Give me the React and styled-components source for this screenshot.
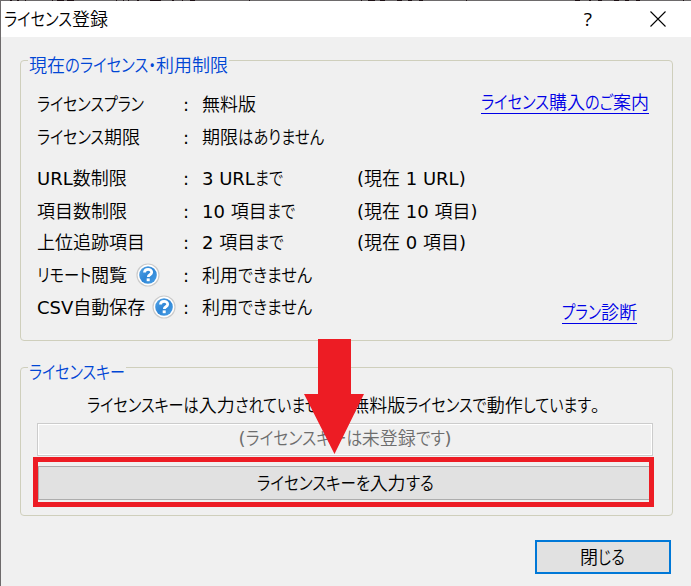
import React, { useLayoutEffect, useRef } from 'react'
import styled, { createGlobalStyle, css } from 'styled-components'

const GlobalStyle = createGlobalStyle`
	body {
		margin: 0;
		overflow: hidden;
		font-family: 'DejaVu Sans', 'Noto Sans CJK JP', sans-serif;
		font-size: 18px;
		font-weight: 350;
		color: #000;
	}

	*, *::before, *::after {
		box-sizing: border-box;
	}
`

const WindowX = styled.div`
	position: relative;
	width: 691px;
	height: 586px;
	display: flex;
	flex-direction: column;
	background-color: #f0f0f0;
	border-left: 1px solid #6d6a6b;
`

const EdgeX = styled.svg`
	display: block;
	flex: 0 0 1px;
	background-color: #6d6a6b;
`

const TitleBarX = styled.header`
	flex: 0 0 36px;
	display: flex;
	align-items: center;
	padding: 0 25px 0 3px;
	background-color: #fff;
`

const TitleX = styled.h1`
	flex: 1;
	margin: 0;
	padding-top: 1px;
	font-size: inherit;
	font-weight: inherit;
	line-height: 18px;
`

const HelpX = styled.span`
	font-family: 'Open Sans', 'Noto Sans', sans-serif;
	font-size: 19px;
	font-weight: 400;
	line-height: 20px;
	margin-right: 58px;
`

const BodyX = styled.main`
	display: flex;
	flex-direction: column;
	padding: 10px 18px 0 19px;
`

const GroupX = styled.fieldset`
	position: relative;
	min-width: 0;
	height: ${props => props.$height}px;
	margin: ${props => props.$top || 0}px 0 0;
	padding: 0;
	border: 1px solid #cfcfbc;
	border-radius: 4px;
`

const LegendX = styled.legend`
	height: 27px;
	margin-left: 7px;
	padding: 10px 1px 0;
	line-height: 18px;
	color: #0046d5;
`

const LicenseX = styled.div`
	display: flex;
	justify-content: space-between;
	padding: 16px 23px 0 16px;
`

const RowX = styled.div`
	display: grid;
	grid-template-columns: 146px 19px 155px auto;
	align-items: center;
	height: 30px;
	margin-top: ${props => props.$gap || 0}px;
	line-height: 20px;
`

const NameX = styled.div`
	display: flex;
	align-items: center;
	gap: ${props => props.$gap || 9}px;

	svg {
		margin-top: -2px;
	}
`

const LinksX = styled.div`
	display: flex;
	flex-direction: column;
	justify-content: space-between;
	align-items: flex-end;
	padding: 2px 0 0;
	margin-bottom: -1px;
`

const LinkX = styled.a`
	height: 22px;
	margin-right: ${props => props.$right || 0}px;
	padding-top: 1px;
	line-height: 20px;
	color: #0000e6;
	border-bottom: 1px solid #0000e6;
`

const KeyX = styled.div`
	display: flex;
	flex-direction: column;
	padding: 15px 19px 0 16px;
`

const MessageX = styled.p`
	margin: 0 0 7px 50px;
	line-height: 20px;
`

const FieldX = styled.div`
	display: flex;
	justify-content: center;
	align-items: center;
	height: 33px;
	padding-bottom: 1px;
	color: #6d6d6d;
	border: 1px solid #ccc;
	box-shadow: inset 0 0 0 1px #fff;
	line-height: 20px;
`

const ButtonX = styled.button`
	display: flex;
	justify-content: center;
	align-items: center;
	height: 34px;
	padding: 1px 1px 0 0;
	font: inherit;
	line-height: 20px;
	color: #000;
	background-color: #e1e1e1;
	border: 1px solid #adadad;

	${props => props.$primary && css`
		align-self: flex-end;
		width: 136px;
		margin: 24px 2px 0 0;
		border: 2px solid #0078d7;
	`}
`

const HighlightX = styled.div`
	position: relative;
	margin: 10px 0 0 1px;
	display: grid;

	&::after {
		content: '';
		position: absolute;
		inset: -9px -1px -7px -5px;
		border: 5px solid #ed1c24;
	}
`

const ArrowX = styled.svg`
	position: absolute;
	left: 302px;
	top: 339px;
`

const TextX = styled.span`
	display: inline-flex;
	align-items: baseline;
	white-space: pre;
`

const RunX = styled.span`
	display: inline-block;
	transform-origin: 0 50%;
	font-weight: ${props => props.$latin ? 400 : 'inherit'};

	${props => props.$kana && css`
		font-feature-settings: 'palt';
	`}
`

const KANA = /[\u3041-\u30ff]/
const LATIN = /[ -~]/
const RUNS = /([\u3041-\u30ff]+|[ -~]+)/

// Narrows the kana runs so that the whole line takes the given width.
const Text = ({ width, children }) => {

	const ref = useRef( null )
	const runs = children.split( RUNS ).filter( Boolean )

	useLayoutEffect( () => {
		const nodes = [ ...ref.current.children ]
		nodes.forEach( node => {
			node.style.width = 'auto'
			node.style.transform = 'none'
		} )

		const sizes = nodes.map( node => node.getBoundingClientRect().width )
		const kana = nodes.map( node => KANA.test( node.textContent ) )
		const total = sizes.reduce( ( sum, size, i ) => sum + ( kana[i] ? size : 0 ), 0 )
		const fixed = sizes.reduce( ( sum, size, i ) => sum + ( kana[i] ? 0 : size ), 0 )

		if ( !width || !total ) return

		const scale = ( width - fixed ) / total
		nodes.forEach( ( node, i ) => {
			if ( !kana[i] ) return
			node.style.width = `${sizes[i] * scale}px`
			node.style.transform = `scaleX(${scale})`
		} )
	}, [ width, children ] )

	return (
		<TextX ref={ref}>
			{runs.map( ( run, i ) => (
				<RunX key={i} $latin={LATIN.test( run )} $kana={KANA.test( run )}>{run}</RunX>
			) )}
		</TextX>
	)

}

const HelpIcon = () => (
	<svg width="24" height="24" viewBox="0 0 24 24">
		<defs>
			<linearGradient id="help" x1="0" y1="0" x2="1" y2="1">
				<stop offset="0" stopColor="#55a5e6" />
				<stop offset="0.5" stopColor="#2f86d6" />
				<stop offset="1" stopColor="#4aa0e6" />
			</linearGradient>
		</defs>
		<circle cx="12" cy="12" r="11" fill="#fff" stroke="#cbcbcb" strokeWidth="1.2" />
		<circle cx="12" cy="12" r="8.8" fill="url(#help)" />
		<path d="M8.5 9.6c0-4.4 7.2-4.3 7.2-.3 0 2.5-3.4 2.4-3.4 4.7" fill="none" stroke="#fff" strokeWidth="2.8" />
		<rect x="10.7" y="15.4" width="3" height="2.8" fill="#fff" />
	</svg>
)

// Parts of the window behind that show along the top edge: [x, width]
const marks = [
	[ 9, 2 ], [ 16, 2 ], [ 24, 1 ], [ 51, 1 ], [ 56, 7 ], [ 66, 7 ], [ 115, 1 ], [ 122, 1 ],
	[ 127, 1 ], [ 136, 2 ], [ 149, 11 ], [ 171, 2 ], [ 181, 1 ], [ 189, 5 ], [ 248, 1 ],
	[ 360, 1 ], [ 367, 7 ], [ 379, 5 ], [ 396, 5 ], [ 407, 4 ], [ 418, 4 ], [ 465, 1 ],
	[ 574, 5 ], [ 588, 2 ], [ 597, 4 ], [ 613, 5 ], [ 624, 4 ], [ 635, 4 ], [ 682, 1 ]
]

const rows = [
	{ name: 'ライセンスプラン', width: 107, value: '無料版', valueWidth: 54 },
	{ name: 'ライセンス期限', width: 103, value: '期限はありません', valueWidth: 122, gap: 3 },
	{ name: 'URL数制限', value: '3 URLまで', valueWidth: 81, extra: '(現在 1 URL)', gap: 11 },
	{ name: '項目数制限', value: '10 項目まで', valueWidth: 93, extra: '(現在 10 項目)', gap: 3 },
	{ name: '上位追跡項目', value: '2 項目まで', valueWidth: 82, extra: '(現在 0 項目)', gap: 1 },
	{ name: 'リモート閲覧', width: 90, value: '利用できません', valueWidth: 110, help: true, gap: 3 },
	{ name: 'CSV自動保存', value: '利用できません', valueWidth: 110, help: true, helpGap: 7, gap: 2 }
]

const App = () => (
	<>
		<GlobalStyle />
		<WindowX>
			<EdgeX width="690" height="1" viewBox="0 0 690 1">
				{marks.map( ([ x, width ]) => <rect key={x} x={x} width={width} height="1" fill="#1c1014" /> )}
			</EdgeX>
			<TitleBarX>
				<TitleX><Text width={104}>ライセンス登録</Text></TitleX>
				<HelpX>?</HelpX>
				<svg width="16" height="16" viewBox="0 0 16 16">
					<path d="M.5.5l15 15M15.5.5l-15 15" stroke="#000" strokeWidth="1.1" />
				</svg>
			</TitleBarX>

			<BodyX>
				<GroupX $height={294}>
					<LegendX><Text width={199}>現在のライセンス・利用制限</Text></LegendX>
					<LicenseX>
						<div>
							{rows.map( row => (
								<RowX key={row.name} $gap={row.gap}>
									<NameX $gap={row.helpGap}>
										<Text width={row.width}>{row.name}</Text>
										{row.help && <HelpIcon />}
									</NameX>
									<Text>:</Text>
									<Text width={row.valueWidth}>{row.value}</Text>
									{row.extra && <Text>{row.extra}</Text>}
								</RowX>
							) )}
						</div>
						<LinksX>
							<LinkX><Text width={168}>ライセンス購入のご案内</Text></LinkX>
							<LinkX $right={12}><Text width={75}>プラン診断</Text></LinkX>
						</LinksX>
					</LicenseX>
				</GroupX>

				<GroupX $height={162} $top={13}>
					<LegendX><Text width={96}>ライセンスキー</Text></LegendX>
					<KeyX>
						<MessageX>
							<Text width={522}>ライセンスキーは入力されていません。無料版ライセンスで動作しています。</Text>
						</MessageX>
						<FieldX><Text width={213}>(ライセンスキーは未登録です)</Text></FieldX>
						<HighlightX>
							<ButtonX><Text width={177}>ライセンスキーを入力する</Text></ButtonX>
						</HighlightX>
					</KeyX>
				</GroupX>

				<ButtonX $primary><Text width={45}>閉じる</Text></ButtonX>
			</BodyX>

			<ArrowX width="62" height="116" viewBox="0 0 62 116">
				<path d="M15 0h33v55h13L31.5 115 1 55h14z" fill="#ed1c24" />
			</ArrowX>
		</WindowX>
	</>
)

export default App
